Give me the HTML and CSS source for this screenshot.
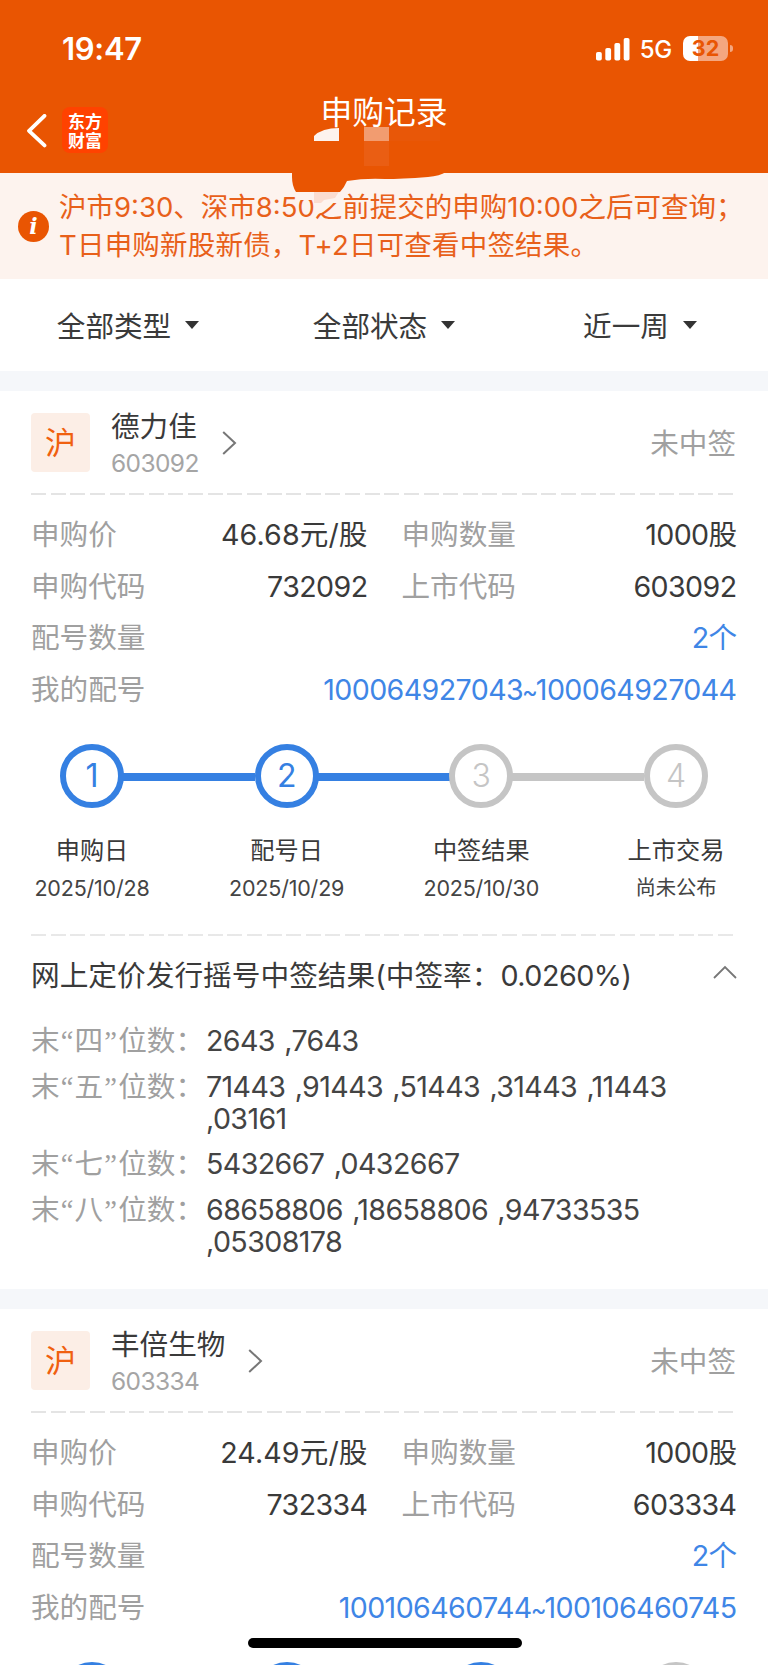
FILE: index.html
```
<!DOCTYPE html>
<html lang="zh-CN">
<head>
    <meta charset="UTF-8">
    <meta name="viewport" content="width=device-width, initial-scale=1.0">
    <title>申购记录</title>
    <link rel="stylesheet" href="styles.css">
</head>
<body>
    <div class="screen">
        <header class="header">
            <div class="status-bar">
                <span class="time">19:47</span>
                <div class="status-icons">
                    <svg class="signal" width="34" height="24" viewBox="0 0 34 24" fill="#fff">
                        <rect x="0" y="15" width="5.8" height="8.5" rx="1.8"/>
                        <rect x="9.3" y="11" width="5.8" height="12.5" rx="1.8"/>
                        <rect x="18.4" y="6" width="5.8" height="17.5" rx="1.8"/>
                        <rect x="27.7" y="1" width="5.8" height="22.5" rx="1.8"/>
                    </svg>
                    <span class="network">5G</span>
                    <div class="battery">32</div>
                </div>
            </div>
            <div class="nav">
                <svg class="back" width="22" height="34" viewBox="0 0 22 34" fill="none" stroke="#fff" stroke-width="3.8" stroke-linecap="round" stroke-linejoin="round">
                    <path d="M18.5 1.8 3 16.8l15.5 14.6"/>
                </svg>
                <div class="logo">东方<br>财富</div>
                <h1>申购记录</h1>
            </div>
        </header>

        <div class="notice">
            <div class="info">i</div>
            <p>沪市9:30、深市8:50之前提交的申购10:00之后可查询；<br><span class="second">T日申购新股新债，T+2日可查看中签结果。</span></p>
        </div>

        <!-- Mosaic smudge over the title -->
        <svg class="smudge" width="180" height="80" viewBox="280 126 180 80">
            <path fill="#fdf3ee" d="M299 190h48l-5 13h-24l-5-3h-14z"/>
            <path fill="#fbdccf" d="M314 190h26l-5 8-11 2-3 3h-7z"/>
            <path fill="#e95502" d="M292 172v5q0 9 4 15h44q4-4 7-11 18-3 38-2 16 0 43-2 12-1 18-5z"/>
            <path fill="#fdf3ee" d="M314 141v-5q8-8 25-8v13z"/>
            <path fill="#f29c70" d="M364 127h25v14h-25z"/>
            <path fill="#ea5e13" d="M364 141h25v25h-25z"/>
            <path fill="#e85708" d="M389 127h51v14h-51z"/>
        </svg>

        <div class="filters">
            <div class="filter">全部类型<i></i></div>
            <div class="filter">全部状态<i></i></div>
            <div class="filter">近一周<i></i></div>
        </div>

        <section class="card">
            <div class="card-head">
                <div class="badge">沪</div>
                <div class="stock">
                    <div class="name">德力佳</div>
                    <div class="code">603092</div>
                </div>
                <svg class="arrow" width="15" height="26" viewBox="0 0 15 26" fill="none" stroke="#777" stroke-width="2">
                    <path d="M1.2 2 13 13 1.2 24"/>
                </svg>
                <span class="result">未中签</span>
            </div>
            <div class="dash"></div>
            <div class="info-grid">
                <div class="row"><span>申购价</span><b class="price">46.68元/股</b></div>
                <div class="row"><span>申购数量</span><b>1000股</b></div>
                <div class="row"><span>申购代码</span><b>732092</b></div>
                <div class="row"><span>上市代码</span><b>603092</b></div>
                <div class="row wide"><span>配号数量</span><b class="link">2个</b></div>
                <div class="row wide"><span>我的配号</span><b class="link">100064927043<i>~</i>100064927044</b></div>
            </div>
            <div class="steps">
                <div class="step done">
                    <div class="circle">1</div>
                    <div class="label">申购日</div>
                    <div class="date">2025/10/28</div>
                </div>
                <div class="step done">
                    <div class="circle">2</div>
                    <div class="label">配号日</div>
                    <div class="date">2025/10/29</div>
                </div>
                <div class="step">
                    <div class="circle">3</div>
                    <div class="label">中签结果</div>
                    <div class="date">2025/10/30</div>
                </div>
                <div class="step">
                    <div class="circle">4</div>
                    <div class="label">上市交易</div>
                    <div class="date date-cn">尚未公布</div>
                </div>
            </div>
            <div class="dash light"></div>
            <div class="lottery-title">
                <h2>网上定价发行摇号中签结果(中签率：<em>0.0260%)</em></h2>
                <svg width="24" height="14" viewBox="0 0 24 14" fill="none" stroke="#777" stroke-width="1.8">
                    <path d="M1 13 12 2l11 11"/>
                </svg>
            </div>
            <dl class="lottery">
                <dt>末<q>“</q>四<q>”</q>位数：</dt>
                <dd>2643 ,7643</dd>
                <dt>末<q>“</q>五<q>”</q>位数：</dt>
                <dd>71443 ,91443 ,51443 ,31443 ,11443<br>,03161</dd>
                <dt>末<q>“</q>七<q>”</q>位数：</dt>
                <dd>5432667 ,0432667</dd>
                <dt>末<q>“</q>八<q>”</q>位数：</dt>
                <dd>68658806 ,18658806 ,94733535<br>,05308178</dd>
            </dl>
        </section>

        <section class="card">
            <div class="card-head">
                <div class="badge">沪</div>
                <div class="stock">
                    <div class="name">丰倍生物</div>
                    <div class="code">603334</div>
                </div>
                <svg class="arrow" width="15" height="26" viewBox="0 0 15 26" fill="none" stroke="#777" stroke-width="2">
                    <path d="M1.2 2 13 13 1.2 24"/>
                </svg>
                <span class="result">未中签</span>
            </div>
            <div class="dash"></div>
            <div class="info-grid">
                <div class="row"><span>申购价</span><b class="price">24.49元/股</b></div>
                <div class="row"><span>申购数量</span><b>1000股</b></div>
                <div class="row"><span>申购代码</span><b>732334</b></div>
                <div class="row"><span>上市代码</span><b>603334</b></div>
                <div class="row wide"><span>配号数量</span><b class="link">2个</b></div>
                <div class="row wide"><span>我的配号</span><b class="link">100106460744<i>~</i>100106460745</b></div>
            </div>
            <div class="steps">
                <div class="step done"><div class="circle"></div></div>
                <div class="step done"><div class="circle"></div></div>
                <div class="step done"><div class="circle"></div></div>
                <div class="step"><div class="circle"></div></div>
            </div>
        </section>

        <div class="home-indicator"></div>
    </div>
</body>
</html>
```
FILE: styles.css
```
* {
    margin: 0;
    padding: 0;
    box-sizing: border-box;
}

body {
    font-family: Inter, 'Noto Sans CJK SC', sans-serif;
    font-size: 28.6px;
    color: #3a3a3a;
    background: #fff;
}

.screen {
    position: relative;
    width: 768px;
    height: 1665px;
    overflow: hidden;
}

/* Header */
.header {
    height: 173px;
    background: #e95502;
    color: #fff;
}

.status-bar {
    display: flex;
    justify-content: space-between;
    align-items: center;
    height: 97px;
    padding: 0 40px 0 62px;
}

.time {
    font-size: 31px;
    font-weight: 600;
    letter-spacing: -0.3px;
}

.status-icons {
    display: flex;
    align-items: center;
}

.network {
    margin: 2px 11px 0 10px;
    font-size: 24px;
    font-weight: 500;
    letter-spacing: -0.3px;
}

.battery {
    position: relative;
    width: 45px;
    height: 25px;
    border-radius: 7px;
    background: linear-gradient(90deg, #fff 15px, #f4a780 15px);
    color: #e95502;
    font-size: 21.5px;
    font-weight: 700;
    line-height: 25px;
    text-align: center;
}

.battery::after {
    content: '';
    position: absolute;
    left: 46.5px;
    top: 9px;
    width: 3px;
    height: 7px;
    border-radius: 0 3px 3px 0;
    background: #f4a780;
}

.nav {
    display: grid;
    grid-template-columns: 34px 220px 208px;
    align-items: start;
    height: 76px;
    padding-left: 26px;
}

.back {
    margin-top: 17px;
}

.logo {
    width: 46px;
    height: 46px;
    margin: 10px 0 0 2px;
    padding-top: 4px;
    border-radius: 8px;
    background: #ff4200;
    font-family: 'Noto Sans CJK SC', sans-serif;
    font-size: 17px;
    font-weight: 700;
    line-height: 19px;
    text-align: center;
}

h1 {
    font-size: 31.8px;
    font-weight: 400;
    line-height: 32px;
    text-align: center;
}

/* Notice */
.notice {
    display: flex;
    align-items: center;
    height: 106px;
    padding-left: 18px;
    background: #fdf3ee;
    color: #e8601a;
}

.info {
    width: 31px;
    height: 31px;
    margin-right: 10px;
    border-radius: 50%;
    background: #e95502;
    color: #fff;
    font-family: 'DejaVu Serif', serif;
    font-size: 22px;
    font-style: italic;
    font-weight: 700;
    line-height: 30px;
    text-align: center;
}

.notice p {
    font-size: 27.5px;
    line-height: 38px;
    white-space: nowrap;
}

.second {
    letter-spacing: 0.2px;
}

.smudge {
    position: absolute;
    left: 280px;
    top: 126px;
}

/* Filters */
.filters {
    display: grid;
    grid-template-columns: repeat(3, 1fr);
    height: 92px;
}

.filter {
    display: flex;
    align-items: center;
    justify-content: center;
    padding-bottom: 2px;
}

.filter i {
    margin: 2px 0 0 14px;
    border: 7px solid transparent;
    border-top: 8px solid #333;
    border-bottom: 0;
}

/* Card */
.card {
    border-top: 20px solid #f5f7fa;
    height: 918px;
}

.card-head {
    display: flex;
    align-items: center;
    height: 103px;
    padding: 0 32px 0 31px;
}

.badge {
    width: 59px;
    height: 59px;
    border-radius: 4px;
    background: #fceee6;
    color: #f0600f;
    font-size: 31px;
    line-height: 59px;
    text-align: center;
}

.stock {
    margin: 0 23px 0 21px;
    padding-top: 3px;
}

.name {
    line-height: 38px;
}

.code {
    color: #a5a5a5;
    font-size: 24.5px;
    line-height: 35px;
    letter-spacing: -0.6px;
}

.result {
    margin-left: auto;
    padding-bottom: 2px;
    color: #a0a0a0;
}

.dash {
    height: 2px;
    margin: -1px 35px 0 31px;
    background: repeating-linear-gradient(90deg, #e4e4e4 0 15px, transparent 15px 19.63px);
}

.dash.light {
    opacity: 0.85;
}

.info-grid {
    display: grid;
    grid-template-columns: 336.5px 335px;
    column-gap: 34px;
    padding: 14px 0 0 31px;
}

.row {
    display: flex;
    justify-content: space-between;
    line-height: 51.6px;
}

.row span {
    color: #a0a0a0;
}

.row b {
    font-weight: 400;
    letter-spacing: -0.6px;
}

.row .price {
    letter-spacing: 0.1px;
}

.row .link {
    color: #3f86e6;
}

.link i {
    margin: 0 -1.5px 0 -1px;
    font-size: 24px;
    font-style: normal;
}

.wide {
    grid-column: 1 / 3;
}

/* Steps */
.steps {
    display: flex;
    justify-content: space-between;
    height: 218px;
    padding: 26.5px 30px 0;
}

.step {
    position: relative;
    width: 124px;
    text-align: center;
    white-space: nowrap;
}

.circle {
    width: 64px;
    height: 64px;
    margin: 0 auto;
    border: 6.5px solid #c5c5c5;
    border-radius: 50%;
    color: #c5c5c5;
    font-size: 32px;
    font-weight: 300;
    line-height: 52px;
}

.step::after {
    content: '';
    position: absolute;
    left: 93px;
    top: 29px;
    width: 132px;
    height: 8px;
    background: #c5c5c5;
}

.step:last-child::after {
    display: none;
}

.done::after {
    background: #3580e2;
}

.done .circle {
    border-color: #3580e2;
    color: #3580e2;
    font-weight: 400;
}

.label {
    margin-top: 25px;
    font-size: 24.2px;
    line-height: 36px;
}

.date {
    margin-top: 1px;
    color: #444;
    font-size: 21.5px;
    letter-spacing: -0.2px;
    line-height: 36px;
}

.date-cn {
    font-size: 20.4px;
}

/* Lottery numbers */
.lottery-title {
    display: flex;
    align-items: center;
    justify-content: space-between;
    height: 80px;
    padding: 0 31px;
}

h2 {
    padding-bottom: 5px;
    font-size: 28.7px;
    font-weight: 400;
    white-space: nowrap;
}

h2 em {
    font-style: normal;
    letter-spacing: -0.5px;
}

.lottery-title svg {
    margin-top: -8px;
}

.lottery {
    display: grid;
    grid-template-columns: 175px 1fr;
    row-gap: 13px;
    padding: 9px 0 0 31px;
    line-height: 32.3px;
}

.lottery dt {
    color: #a0a0a0;
    white-space: nowrap;
}

.lottery q {
    display: inline-block;
    width: 15px;
    font-family: 'Liberation Serif', serif;
    line-height: 30px;
    quotes: none;
    text-align: center;
}

.lottery dd {
    color: #444;
    letter-spacing: -0.6px;
    word-spacing: 1.8px;
}

.home-indicator {
    position: absolute;
    left: 248px;
    bottom: 17px;
    width: 274px;
    height: 10px;
    border-radius: 5px;
    background: #000;
}
```
